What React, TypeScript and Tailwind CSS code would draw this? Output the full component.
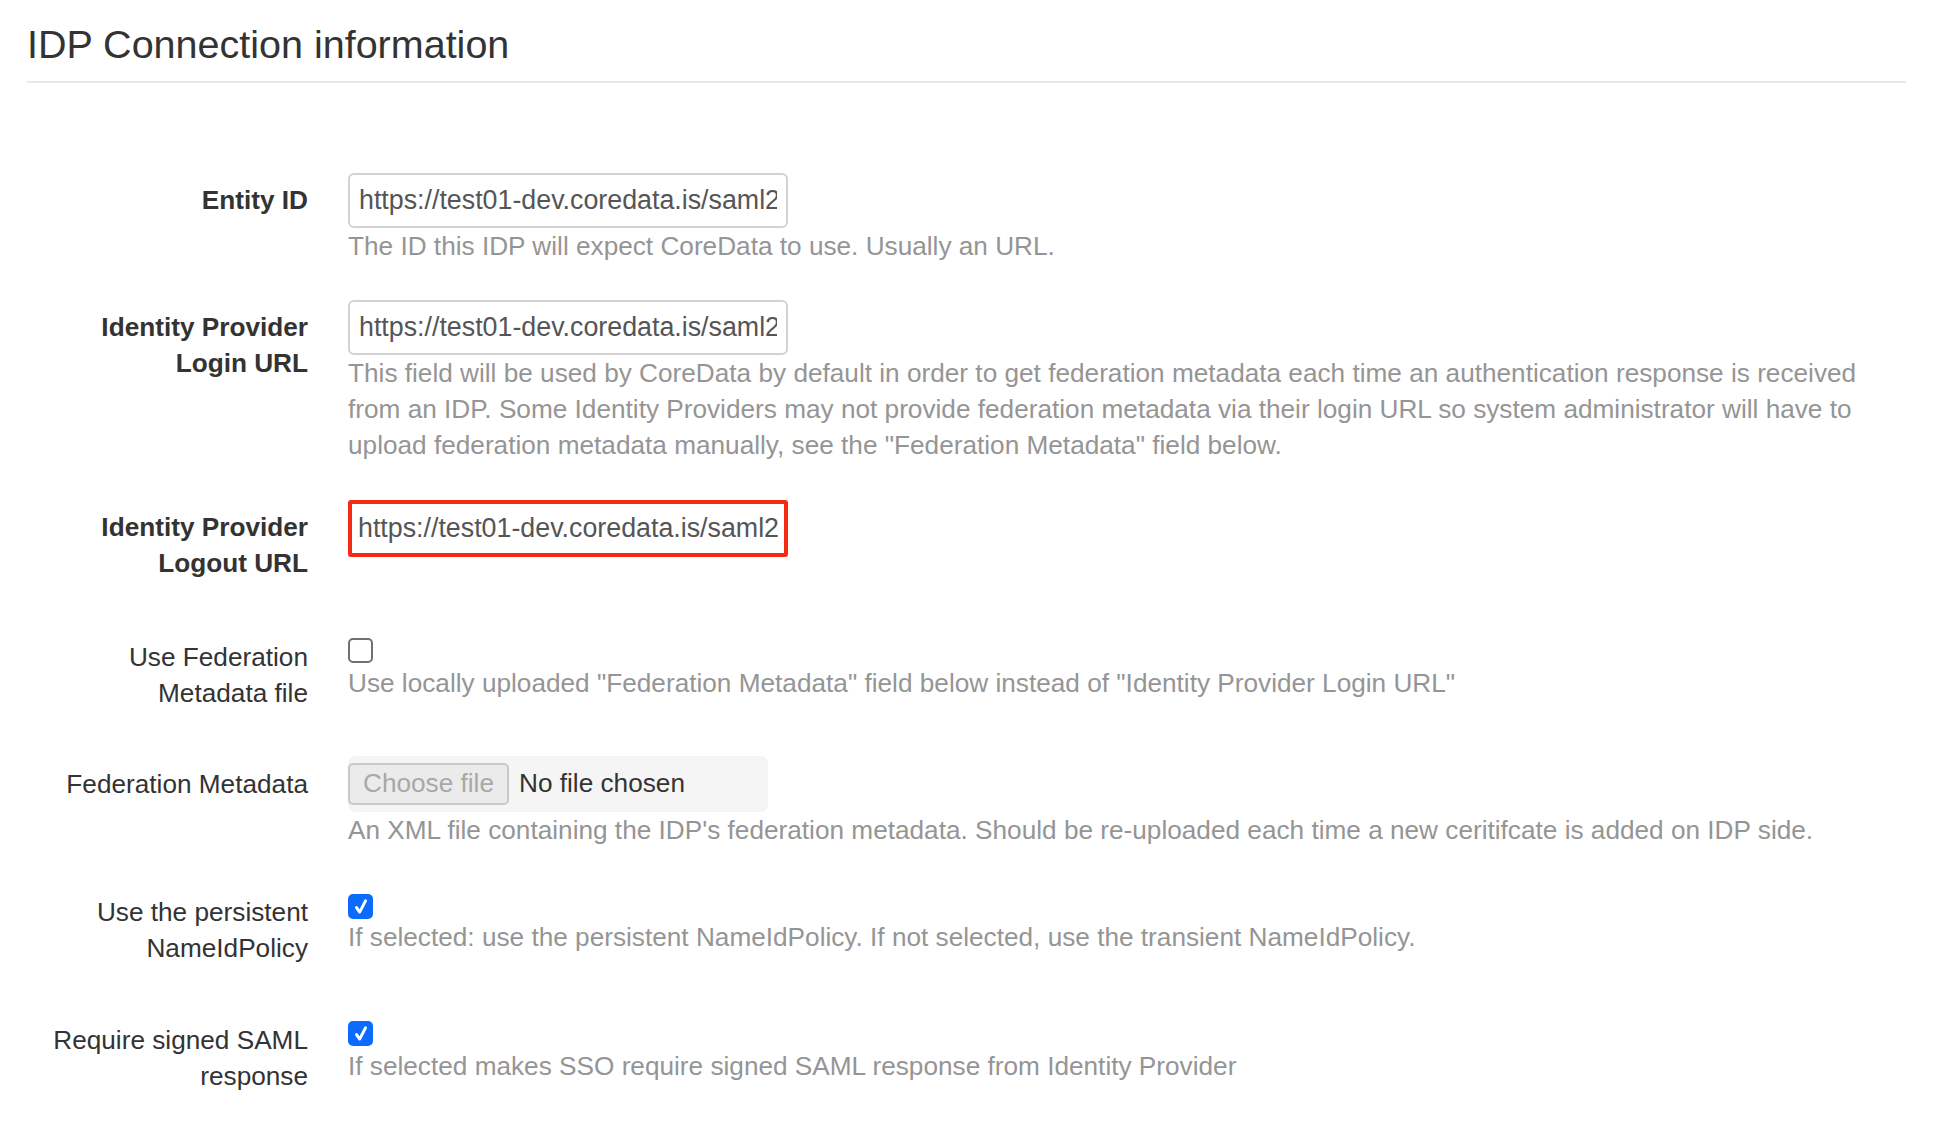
import React from 'react';

const Check = ({ checked }: { checked: boolean }) =>
  checked ? (
    <div className="w-[25px] h-[25px] rounded-[5px] bg-[#0b6bfe] flex items-center justify-center">
      <svg className="w-[18px] h-[18px]" viewBox="0 0 16 16" fill="none" stroke="white" strokeWidth="2.6" strokeLinecap="round" strokeLinejoin="round">
        <polyline points="4 8.5 6.8 12.5 12 2.5" />
      </svg>
    </div>
  ) : (
    <div className="w-[25px] h-[25px] rounded-[5px] border-2 border-[#707070] bg-white" />
  );

const Row = ({
  label,
  bold,
  labelClass,
  className,
  children,
}: {
  label: React.ReactNode;
  bold?: boolean;
  labelClass: string;
  className: string;
  children: React.ReactNode;
}) => (
  <div className={`flex items-start ${className}`}>
    <div className={`w-[281px] shrink-0 text-right leading-[36px] text-[#333] ${bold ? 'font-bold' : ''} ${labelClass}`}>
      {label}
    </div>
    <div className="ml-[40px] flex-1 pr-[20px]">{children}</div>
  </div>
);

const Help = ({ children, className = '' }: { children: React.ReactNode; className?: string }) => (
  <p className={`leading-[36px] text-[#959595] ${className}`}>{children}</p>
);

const URL_VALUE = 'https://test01-dev.coredata.is/saml2';

export default function App() {
  return (
    <div className="w-full min-h-screen bg-white text-[26.2px] text-[#333] font-['Liberation_Sans',Arial,sans-serif]">
      <h1 className="ml-[27px] mr-[48px] pt-[20px] pb-[13px] text-[39.5px] leading-[48px] font-normal text-[#333] border-b-2 border-[#e8e8e8]">
        IDP Connection information
      </h1>

      <div className="pl-[27px] pr-[48px] pb-[40px]">
        <Row label="Entity ID" bold labelClass="pt-[9px]" className="mt-[90px]">
          <input
            readOnly
            value={URL_VALUE}
            className="block w-[440px] h-[55px] px-[9px] bg-white text-[26.8px] text-[#555] border-2 border-[#d3d3d3] rounded-[6px] outline-none"
          />
          <Help>The ID this IDP will expect CoreData to use. Usually an URL.</Help>
        </Row>

        <Row label={<>Identity Provider<br />Login URL</>} bold labelClass="pt-[9px]" className="mt-[36px]">
          <input
            readOnly
            value={URL_VALUE}
            className="block w-[440px] h-[55px] px-[9px] bg-white text-[26.8px] text-[#555] border-2 border-[#d3d3d3] rounded-[6px] outline-none"
          />
          <Help>
            This field will be used by CoreData by default in order to get federation metadata each time an authentication response is received from an IDP. Some Identity Providers may not provide federation metadata via their login URL so system administrator will have to upload federation metadata manually, see the "Federation Metadata" field below.
          </Help>
        </Row>

        <Row label={<>Identity Provider<br />Logout URL</>} bold labelClass="pt-[9px]" className="mt-[37px]">
          <input
            readOnly
            value={URL_VALUE}
            className="block w-[440px] h-[57px] px-[6px] bg-white text-[26.8px] text-[#555] border-4 border-[#f42a13] rounded-[3px] outline-none"
          />
        </Row>

        <Row label={<>Use Federation<br />Metadata file</>} labelClass="pt-[1px]" className="mt-[57px]">
          <Check checked={false} />
          <Help className="mt-[2px]">Use locally uploaded "Federation Metadata" field below instead of "Identity Provider Login URL"</Help>
        </Row>

        <Row label="Federation Metadata" labelClass="pt-[10px]" className="mt-[45px]">
          <div className="w-[420px] h-[56px] rounded-[7px] bg-[#f5f5f5] flex items-center">
            <div className="w-[161px] h-[42px] rounded-[5px] border-2 border-[#c9c9c9] bg-[#ebebeb] text-[#a8a8a8] flex items-center justify-center">
              Choose file
            </div>
            <span className="ml-[10px] text-[#333]">No file chosen</span>
          </div>
          <Help>An XML file containing the IDP's federation metadata. Should be re-uploaded each time a new ceritifcate is added on IDP side.</Help>
        </Row>

        <Row label={<>Use the persistent<br />NameIdPolicy</>} labelClass="pt-[1px]" className="mt-[45px]">
          <div className="mt-[1px]">
            <Check checked />
          </div>
          <Help>If selected: use the persistent NameIdPolicy. If not selected, use the transient NameIdPolicy.</Help>
        </Row>

        <Row label={<>Require signed SAML<br />response</>} labelClass="pt-[1px]" className="mt-[55px]">
          <Check checked />
          <Help className="mt-[2px]">If selected makes SSO require signed SAML response from Identity Provider</Help>
        </Row>
      </div>
    </div>
  );
}
